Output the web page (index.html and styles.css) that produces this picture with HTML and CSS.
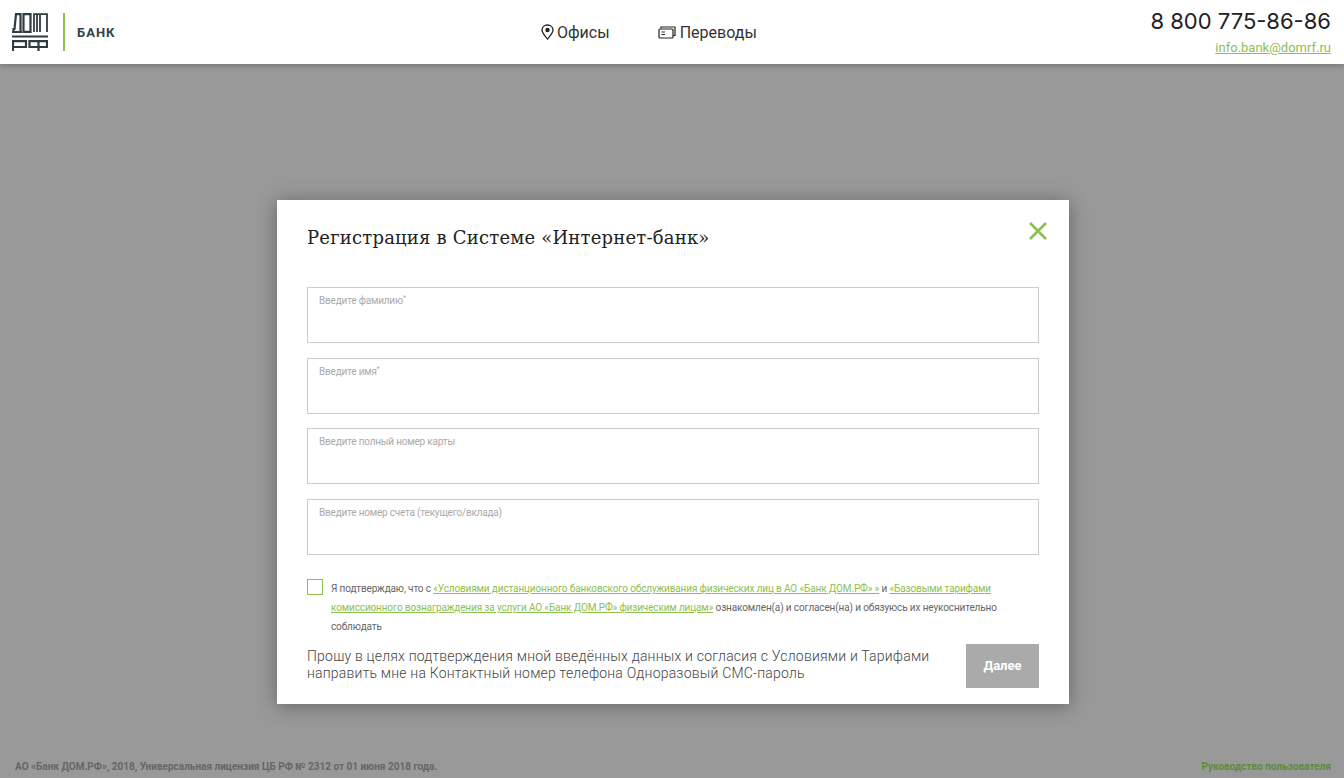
FILE: index.html
```html
<!DOCTYPE html>
<html lang="ru">
<head>
  <meta charset="UTF-8" />
  <meta name="viewport" content="width=device-width, initial-scale=1.0"/>
  <title>Банк ДОМ.РФ</title>
  <link rel="stylesheet" href="styles.css">
</head>
<body>
  <header class="top">
    <div class="brand">
      <svg class="logo" width="36" height="38" viewBox="0 0 36 38" fill="none" stroke="#2f3c42" stroke-width="2.200">
        <path d="M0 19H10M1.500 19V16H2.500L4 1.100H8.500V19"/>
        <path d="M11.500 18.900V1.100H18.500V18.900H11.500Z"/>
        <path d="M22 19V1.100H28V19M28 1.100H35V19M25 1.100V19" stroke-width="1.800"/>
        <path d="M0 23.500H36"/>
        <path d="M1 38V28.100H14V34H1"/>
        <path d="M17.500 28.100H35V34H17.500V28.100ZM26.500 27V38"/>
      </svg>
      <span class="brand-line"></span>
      <span class="brand-name">БАНК</span>
    </div>
    <nav class="menu">
      <a class="menu-item">
        <svg width="13" height="16" viewBox="0 0 13 16" fill="none" stroke="#222" stroke-width="1.300">
          <path d="M6.500 15C4 11.800 1 9 1 6C1 3 3.400 1 6.500 1S12 3 12 6C12 9 9 11.800 6.500 15Z"/>
          <circle cx="6.500" cy="6" r="2.200" fill="#222" stroke="none"/>
        </svg>
        Офисы
      </a>
      <a class="menu-item">
        <svg width="18" height="13" viewBox="0 0 18 13" fill="none" stroke="#222" stroke-width="1.200">
          <path d="M3 2.500V1H17V9.500H15"/>
          <rect x="1" y="3" width="14" height="9" rx="1"/>
          <path d="M3.500 6H7M3.500 8.500H7" stroke-width="1.100"/>
        </svg>
        Переводы
      </a>
    </nav>
    <div class="contacts">
      <div class="phone">8 800 775-86-86</div>
      <a class="mail">info.bank@domrf.ru</a>
    </div>
  </header>

  <main class="page">
    <div class="modal">
      <div class="modal-head">
        <h2>Регистрация в Системе «Интернет-банк»</h2>
        <svg class="close" width="20" height="20" viewBox="0 0 20 20" stroke="#8cc152" stroke-width="2.600">
          <path d="M2 2L18 18M18 2L2 18"/>
        </svg>
      </div>
      <form class="fields">
        <label class="field"><span>Введите фамилию<sup>*</sup></span></label>
        <label class="field"><span>Введите имя<sup>*</sup></span></label>
        <label class="field"><span>Введите полный номер карты</span></label>
        <label class="field"><span>Введите номер счета (текущего/вклада)</span></label>
      </form>
      <div class="agree">
        <span class="check"></span>
        <p>Я подтверждаю, что с <a>«Условиями дистанционного банковского обслуживания физических лиц в АО «Банк ДОМ.РФ» »</a> и <a>«Базовыми тарифами</a><br/><a>комиссионного вознаграждения за услуги АО «Банк ДОМ.РФ» физическим лицам»</a> ознакомлен(а) и согласен(на) и обязуюсь их неукоснительно<br/>соблюдать</p>
      </div>
      <div class="submit-row">
        <p>Прошу в целях подтверждения мной введённых данных и согласия с Условиями и Тарифами направить мне на Контактный номер телефона Одноразовый СМС-пароль</p>
        <button type="button">Далее</button>
      </div>
    </div>
  </main>

  <footer class="bottom">
    <span>АО «Банк ДОМ.РФ», 2018, Универсальная лицензия ЦБ РФ № 2312 от 01 июня 2018 года.</span>
    <a>Руководство пользователя</a>
  </footer>
</body>
</html>
```

FILE: styles.css
```css
html, body {
  height: 100%;
}
body {
  margin: 0;
  display: flex;
  flex-direction: column;
  height: 778px;
  overflow: hidden;
  background: #999;
  font-family: "Roboto", sans-serif;
}
.top {
  height: 64px;
  flex: none;
  display: flex;
  align-items: center;
  justify-content: space-between;
  padding: 0 13px 0 12px;
  background: #fff;
  box-shadow: 0 1px 6px rgba(0,0,0,0.3);
}
.brand {
  width: 400px;
  display: flex;
  align-items: center;
}
.logo {
  display: block;
}
.brand-line {
  width: 2px;
  height: 38px;
  margin-left: 15px;
  background: #8cc152;
}
.brand-name {
  margin-left: 12px;
  color: #33424a;
  font-size: 13px;
  font-weight: 700;
  letter-spacing: 1px;
}
.menu {
  display: flex;
  gap: 48px;
  margin-left: 129px;
}
.menu-item {
  display: flex;
  align-items: center;
  gap: 3px;
  color: #333;
  font-size: 16px;
}
.menu-item + .menu-item {
  gap: 4px;
}
.contacts {
  flex: 1;
  text-align: right;
}
.phone {
  color: #222;
  font-family: "Inter", sans-serif;
  font-size: 22px;
  line-height: 24px;
}
.mail {
  display: block;
  margin-top: 7px;
  color: #8cc152;
  font-size: 13px;
  line-height: 15px;
  text-decoration: underline;
}
.page {
  flex: 1;
  padding: 136px 0 0 2px;
}
.modal {
  width: 792px;
  height: 504px;
  box-sizing: border-box;
  margin: 0 auto;
  padding: 0 30px;
  background: #fff;
  box-shadow: 0 2px 18px rgba(0,0,0,0.35);
}
.modal-head {
  height: 87px;
  display: flex;
  justify-content: space-between;
}
.modal-head h2 {
  margin: 27px 0 0;
  color: #222;
  font-family: "DejaVu Serif", serif;
  font-size: 18px;
  line-height: 22px;
  font-weight: 400;
  letter-spacing: 0.2px;
}
.close {
  margin-top: 21px;
  margin-right: -9px;
}
.fields {
  display: flex;
  flex-direction: column;
  gap: 14.670px;
}
.field {
  display: block;
  height: 56px;
  box-sizing: border-box;
  padding: 6px 11px;
  border: 1px solid #ccc;
  color: #aaa;
  font-size: 10px;
  line-height: 14px;
  letter-spacing: -0.2px;
}
.field sup {
  font-size: 7px;
  line-height: 0;
}
.agree {
  display: flex;
  gap: 8px;
  margin-top: 24px;
}
.check {
  flex: none;
  width: 16px;
  height: 16px;
  box-sizing: border-box;
  border: 1px solid #8cc152;
}
.agree p {
  margin: 0;
  color: #666;
  font-size: 10px;
  line-height: 19px;
  letter-spacing: -0.13px;
}
.agree a {
  color: #8cc152;
  text-decoration: underline;
}
.submit-row {
  display: flex;
  justify-content: space-between;
  align-items: flex-start;
  margin-top: 8px;
}
.submit-row p {
  width: 640px;
  margin: 4px 0 0;
  color: #444;
  font-size: 14px;
  font-weight: 300;
  line-height: 17px;
  letter-spacing: 0.2px;
}
.submit-row button {
  width: 73px;
  height: 44px;
  border: none;
  background: #aaa;
  color: #fff;
  font-family: "Roboto", sans-serif;
  font-size: 13px;
  font-weight: 700;
}
.bottom {
  flex: none;
  display: flex;
  justify-content: space-between;
  padding: 0 13px 5px 15px;
  color: #666;
  font-size: 10px;
  font-weight: 700;
  line-height: 12px;
}
.bottom a {
  color: #5f8a3a;
}
```
